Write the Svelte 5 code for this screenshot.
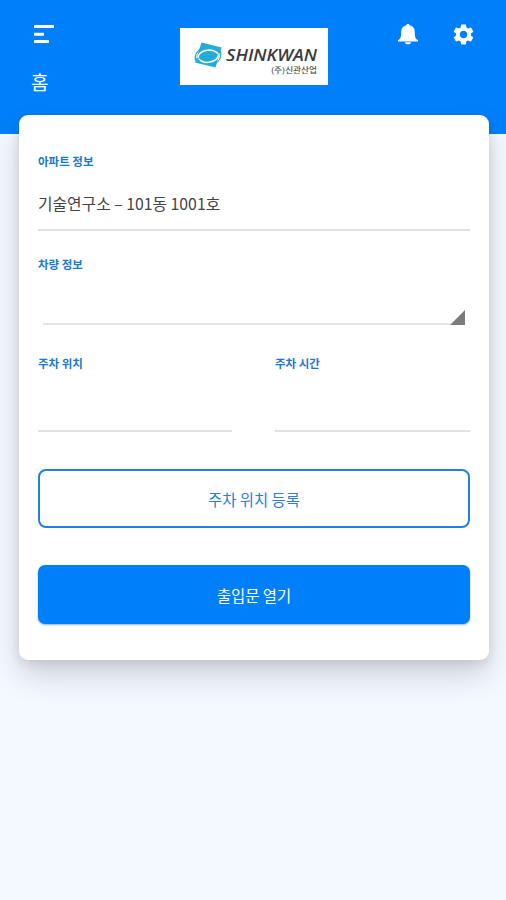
<script lang="ts">
	const apartment = '기술연구소 – 101동 1001호';

	const parking = [
		{ label: '주차 위치', value: '' },
		{ label: '주차 시간', value: '' }
	];
</script>

<div class="page">
	<header>
		<div class="side">
			<button class="icon" aria-label="메뉴">
				<svg width="20" height="20" viewBox="0 0 20 20" fill="currentColor">
					<rect x="0" y="1" width="20" height="3" rx="0.6" />
					<rect x="0" y="8.7" width="10" height="3" rx="0.6" />
					<rect x="0" y="16" width="15" height="3" rx="0.6" />
				</svg>
			</button>
			<h1>홈</h1>
		</div>

		<div class="logo">
			<svg width="148" height="57" viewBox="0 0 148 57">
				<path d="M21.5 14.5 L41.5 19.5 L35.5 39.5 L15 34.5 Z" fill="#25acd6" />
				<g fill="none" stroke-linecap="round">
					<path d="M18 29.5 C19 22 31 19.5 38 25.5" stroke="#fff" stroke-width="1.5" />
					<path d="M19 31 C24 37 37 34.5 38.5 27" stroke="#fff" stroke-width="1.5" />
					<path d="M15.5 32 C14.5 26 17 23 21 20.5" stroke="#25acd6" stroke-width="1.4" />
					<path d="M40.5 23 C42 30 39 34 34 36" stroke="#25acd6" stroke-width="1.2" />
				</g>
				<text class="brand" x="46" y="33" textLength="91" lengthAdjust="spacingAndGlyphs">SHINKWAN</text>
				<text class="company" x="91" y="44.5" textLength="46" lengthAdjust="spacingAndGlyphs">(주)신관산업</text>
			</svg>
		</div>

		<div class="actions">
			<button class="icon" aria-label="알림">
				<svg width="20" height="21" viewBox="0 0 20 21" fill="currentColor">
					<path
						d="M10 0 C11 0 11.6 .7 11.6 1.2 C15.4 2 16.8 5 16.8 8.2 C16.8 12.5 17.2 14.5 20 16.3 V17.5 H0 V16.3 C2.8 14.5 3.2 12.5 3.2 8.2 C3.2 5 4.6 2 8.4 1.2 C8.4 .7 9 0 10 0 Z"
					/>
					<path d="M6.8 18.2 H13.2 C12.8 19.6 11.6 20.2 10 20.2 C8.4 20.2 7.2 19.6 6.8 18.2 Z" />
				</svg>
			</button>
			<button class="icon" aria-label="설정">
				<svg width="25" height="25" viewBox="0 0 24 24" fill="currentColor">
					<path
						d="M19.14 12.94c.04-.3.06-.61.06-.94 0-.32-.02-.64-.07-.94l2.03-1.58c.18-.14.23-.41.12-.61l-1.92-3.32c-.12-.22-.37-.29-.59-.22l-2.39.96c-.5-.38-1.03-.7-1.62-.94l-.36-2.54c-.04-.24-.24-.41-.48-.41h-3.84c-.24 0-.43.17-.47.41l-.36 2.54c-.59.24-1.13.57-1.62.94l-2.39-.96c-.22-.08-.47 0-.59.22L2.74 8.87c-.12.21-.08.47.12.61l2.03 1.58c-.05.3-.09.63-.09.94s.02.64.07.94l-2.03 1.58c-.18.14-.23.41-.12.61l1.92 3.32c.12.22.37.29.59.22l2.39-.96c.5.38 1.03.7 1.62.94l.36 2.54c.05.24.24.41.48.41h3.84c.24 0 .44-.17.47-.41l.36-2.54c.59-.24 1.13-.56 1.62-.94l2.39.96c.22.08.47 0 .59-.22l1.92-3.32c.12-.22.07-.47-.12-.61l-2.01-1.58zM12 15.6c-1.98 0-3.6-1.62-3.6-3.6s1.62-3.6 3.6-3.6 3.6 1.62 3.6 3.6-1.62 3.6-3.6 3.6z"
					/>
				</svg>
			</button>
		</div>
	</header>

	<main>
		<section class="field">
			<h2>아파트 정보</h2>
			<div class="value">{apartment}</div>
		</section>

		<section class="field">
			<h2>차량 정보</h2>
			<div class="spinner">
				<svg width="15" height="15" viewBox="0 0 15 15"><path d="M15 0 V15 H0 Z" fill="#7c7c7c" /></svg>
			</div>
		</section>

		<div class="columns">
			{#each parking as item}
				<section class="field">
					<h2>{item.label}</h2>
					<div class="value">{item.value}</div>
				</section>
			{/each}
		</div>

		<button class="btn outline">주차 위치 등록</button>
		<button class="btn primary">출입문 열기</button>
	</main>
</div>

<style>
	:global(body) {
		margin: 0;
		background: #f4f8ff;
	}

	.page {
		min-height: 900px;
		box-sizing: border-box;
		font-family: 'Noto Sans CJK KR', sans-serif;
		color: #444;
	}

	header {
		display: grid;
		grid-template-columns: 1fr 148px 1fr;
		align-items: start;
		height: 134px;
		box-sizing: border-box;
		padding: 24px 30px 0 31px;
		background: #007ffb;
		color: #fff;
	}

	button {
		appearance: none;
		border: none;
		padding: 0;
		margin: 0;
		font: inherit;
	}

	.icon {
		display: flex;
		background: none;
		color: inherit;
	}

	.side .icon {
		padding-left: 3px;
	}

	h1 {
		margin: 24px 0 0;
		font-size: 19px;
		line-height: 28px;
		font-weight: 400;
	}

	.logo {
		display: flex;
		margin-top: 4px;
		background: #fff;
	}

	.brand {
		font: italic 600 16px 'Open Sans', sans-serif;
		fill: #3a3a3f;
	}

	.company {
		font-size: 7.5px;
		font-weight: 500;
		fill: #505055;
	}

	.actions {
		display: flex;
		justify-content: flex-end;
		align-items: center;
		gap: 33px;
		height: 21px;
	}

	main {
		display: flex;
		flex-direction: column;
		height: 545px;
		box-sizing: border-box;
		margin: -19px 17px 0 19px;
		padding: 36px 19px 0;
		position: relative;
		background: #fff;
		border-radius: 9px;
		box-shadow:
			0 16px 30px rgba(0, 0, 0, 0.15),
			0 3px 12px rgba(0, 0, 0, 0.1);
	}

	h2 {
		margin: 0;
		font-size: 11.5px;
		line-height: 20px;
		font-weight: 700;
		color: #1a7ad0;
	}

	.value {
		height: 60px;
		box-sizing: border-box;
		border-bottom: 2px solid #e2e2e2;
		padding-top: 19px;
		font-size: 15.8px;
		line-height: 28px;
		white-space: nowrap;
	}

	.field + .field {
		margin-top: 23px;
	}

	.spinner {
		display: flex;
		justify-content: flex-end;
		align-items: flex-end;
		height: 51px;
		box-sizing: border-box;
		margin: 0 5px;
		background: linear-gradient(#e6e6e6, #e6e6e6) bottom / 100% 2px no-repeat;
	}

	.columns {
		display: grid;
		grid-template-columns: 194px 195px;
		justify-content: space-between;
		margin-top: 28px;
	}

	.columns .field {
		margin: 0;
	}

	.columns .value {
		height: 59px;
	}

	.btn {
		height: 59px;
		border-radius: 8px;
		font-size: 15.4px;
	}

	.outline {
		margin-top: 37px;
		border: 2px solid #2280dd;
		background: #fff;
		color: #2780d4;
	}

	.primary {
		margin-top: 37px;
		border-radius: 7px;
		background: #007ffb;
		color: #fff;
		box-shadow: 0 1px 2px rgba(0, 60, 140, 0.4);
	}
</style>
